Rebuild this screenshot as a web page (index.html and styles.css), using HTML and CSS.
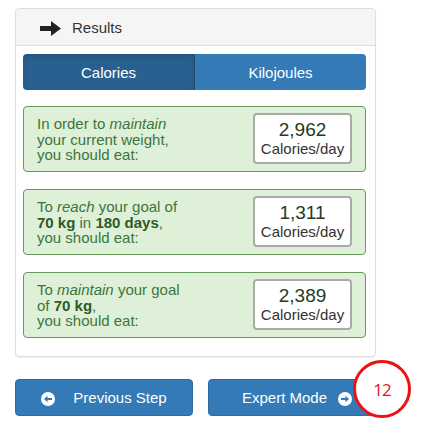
FILE: index.html
```html
<!DOCTYPE html>
<html>
<head>
<meta charset="utf-8">
<link rel="stylesheet" href="styles.css">
</head>
<body>
<div class="page">
  <div class="panel">
    <div class="panel-heading">
      <svg class="head-arrow" width="21" height="15" viewBox="0 0 21 15"><path d="M0 5 H11 V0 L21 7.5 L11 15 V10 H0 Z" fill="#222"/></svg>
      <span>Results</span>
    </div>
    <div class="panel-body">
      <div class="toggle">
        <div class="tbtn active">Calories</div>
        <div class="tbtn">Kilojoules</div>
      </div>
      <div class="result">
        <div class="rtext">In order to <i>maintain</i><br>your current weight,<br>you should eat:</div>
        <div class="rval"><div class="num">2,962</div><div class="unit">Calories/day</div></div>
      </div>
      <div class="result">
        <div class="rtext">To <i>reach</i> your goal of<br><b>70 kg</b> in <b>180 days</b>,<br>you should eat:</div>
        <div class="rval"><div class="num">1,311</div><div class="unit">Calories/day</div></div>
      </div>
      <div class="result">
        <div class="rtext">To <i>maintain</i> your goal<br>of <b>70 kg</b>,<br>you should eat:</div>
        <div class="rval"><div class="num">2,389</div><div class="unit">Calories/day</div></div>
      </div>
    </div>
  </div>
  <div class="nav">
    <div class="btn">
      <svg class="cicon" width="14" height="14" viewBox="0 0 14 14"><circle cx="7" cy="7" r="7" fill="#fff"/><path d="M11 6 H6.5 V3.8 L3 7 L6.5 10.2 V8 H11 Z" fill="#337ab7"/></svg>
      <span class="prev-label">Previous Step</span>
    </div>
    <div class="btn">
      <span class="next-label">Expert Mode</span>
      <svg class="cicon" width="14" height="14" viewBox="0 0 14 14"><circle cx="7" cy="7" r="7" fill="#fff"/><path d="M3 6 H7.5 V3.8 L11 7 L7.5 10.2 V8 H3 Z" fill="#337ab7"/></svg>
    </div>
  </div>
  <div class="marker">12</div>
</div>
</body>
</html>
```
FILE: styles.css
```css
html, body {
  margin: 0;
  padding: 0;
  background: #fff;
}
body {
  font-family: "Liberation Sans", Arial, sans-serif;
  font-size: 15px;
  color: #333;
}
.page {
  position: relative;
  padding: 8px 0 0 15px;
  width: 408px;
  height: 434px;
}
.panel {
  width: 361px;
  box-sizing: border-box;
  border: 1px solid #ddd;
  border-radius: 4px;
  box-shadow: 0 1px 1px rgba(0,0,0,0.05);
  background: #fff;
}
.panel-heading {
  height: 36px;
  background: #f5f5f5;
  border-bottom: 1px solid #ddd;
  border-radius: 3px 3px 0 0;
  display: flex;
  align-items: center;
  padding-left: 24px;
}
.head-arrow {
  margin-right: 11px;
  margin-top: 2px;
}
.panel-body {
  padding: 8px 9px 18px 7px;
}
.toggle {
  display: flex;
  height: 36px;
  border-radius: 4px;
  overflow: hidden;
  margin-bottom: 16px;
}
.tbtn {
  flex: 1;
  background: #337ab7;
  color: #fff;
  display: flex;
  align-items: center;
  justify-content: center;
}
.tbtn.active {
  background: #286090;
  box-shadow: inset 0 3px 5px rgba(0,0,0,0.125);
  border-right: 1px solid #204d74;
}
.result {
  height: 66px;
  box-sizing: border-box;
  background: #dff0d8;
  border: 1px solid #659a58;
  border-radius: 4px;
  display: flex;
  align-items: center;
  justify-content: space-between;
  padding: 0 13px;
  margin-bottom: 17px;
  color: #3c763d;
}
.result:last-child {
  margin-bottom: 0;
}
.rtext {
  line-height: 15.5px;
  padding-top: 1px;
}
.rtext b {
  color: #2f5a26;
}
.rval {
  width: 99px;
  height: 51px;
  box-sizing: border-box;
  background: #fff;
  border: 2px solid #aaa;
  border-radius: 4px;
  display: flex;
  flex-direction: column;
  align-items: center;
  justify-content: center;
  margin-top: -1px;
}
.num {
  font-size: 19px;
  line-height: 20px;
  color: #253b1f;
}
.unit {
  font-size: 15px;
  line-height: 18px;
  color: #333;
}
.nav {
  display: flex;
  gap: 15px;
  margin-top: 22px;
}
.btn {
  width: 178px;
  height: 37px;
  box-sizing: border-box;
  background: #337ab7;
  border: 1px solid #2e6da4;
  border-radius: 4px;
  color: #fff;
  display: flex;
  align-items: center;
  justify-content: center;
}
.prev-label {
  margin-left: 18px;
}
.next-label {
  margin-right: 11px;
}
.cicon {
  margin-top: 2px;
}
.marker {
  position: absolute;
  left: 353px;
  top: 360px;
  width: 58px;
  height: 58px;
  box-sizing: border-box;
  border: 3px solid #ee1111;
  border-radius: 50%;
  background: #fff;
  color: #e8141c;
  font-family: "Open Sans", sans-serif;
  font-size: 17px;
  letter-spacing: -1px;
  display: flex;
  align-items: center;
  justify-content: center;
}
```
